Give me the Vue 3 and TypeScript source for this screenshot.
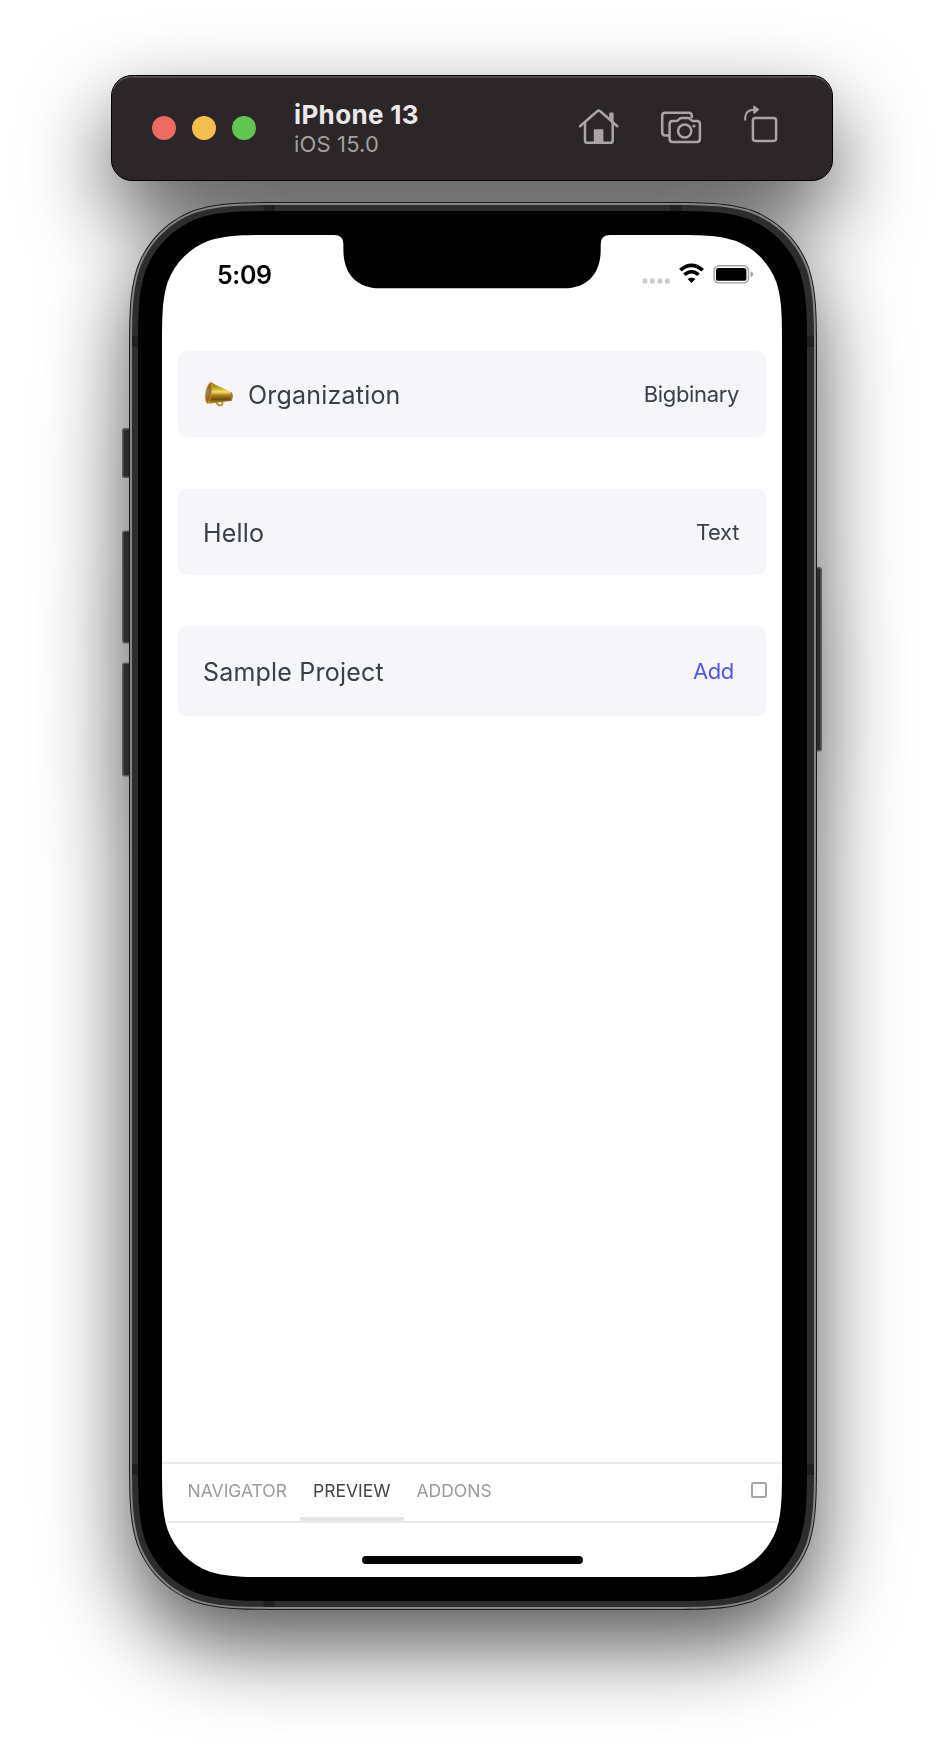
<script setup lang="ts">
interface Box {
  x: number
  y: number
  w: number
  h: number
}

// Rounded rectangle with continuous-curvature corners.
function smoothRect(x: number, y: number, w: number, h: number, r: number): string {
  const a = 1.528665 * r
  const b = 1.088493 * r
  const c = 0.868407 * r
  const d = 0.631494 * r
  const e = 0.074911 * r
  const f = 0.372824 * r
  const g = 0.16906 * r
  const R = x + w
  const B = y + h
  return [
    `M${x + a} ${y}H${R - a}`,
    `C${R - b} ${y} ${R - c} ${y} ${R - d} ${y + e}`,
    `C${R - f} ${y + g} ${R - g} ${y + f} ${R - e} ${y + d}`,
    `C${R} ${y + c} ${R} ${y + b} ${R} ${y + a}`,
    `V${B - a}`,
    `C${R} ${B - b} ${R} ${B - c} ${R - e} ${B - d}`,
    `C${R - g} ${B - f} ${R - f} ${B - g} ${R - d} ${B - e}`,
    `C${R - c} ${B} ${R - b} ${B} ${R - a} ${B}`,
    `H${x + a}`,
    `C${x + b} ${B} ${x + c} ${B} ${x + d} ${B - e}`,
    `C${x + f} ${B - g} ${x + g} ${B - f} ${x + e} ${B - d}`,
    `C${x} ${B - c} ${x} ${B - b} ${x} ${B - a}`,
    `V${y + a}`,
    `C${x} ${y + b} ${x} ${y + c} ${x + e} ${y + d}`,
    `C${x + g} ${y + f} ${x + f} ${y + g} ${x + d} ${y + e}`,
    `C${x + c} ${y} ${x + b} ${y} ${x + a} ${y}Z`,
  ].join('')
}

const shells = [
  { d: smoothRect(129, 202, 688, 1408, 104), fill: '#1a1a1a' },
  { d: smoothRect(130, 203, 686, 1406, 103), fill: '#858585' },
  { d: smoothRect(132, 205, 682, 1402, 101), fill: '#2d2d2d' },
  { d: smoothRect(138, 211, 669, 1390, 96), fill: '#000' },
  { d: smoothRect(162, 235, 620, 1342, 75), fill: '#fff' },
]
const screenClip = { clipPath: `path("${smoothRect(0, 0, 620, 1342, 75)}")` }

const keys: Box[] = [
  { x: 122, y: 428, w: 12, h: 50 },
  { x: 122, y: 530.5, w: 12, h: 113 },
  { x: 122, y: 662.5, w: 12, h: 114 },
  { x: 812, y: 567, w: 10, h: 184.5 },
]

const bands: Box[] = [
  { x: 263.7, y: 205, w: 11, h: 6 },
  { x: 670, y: 205, w: 11, h: 6 },
  { x: 132, y: 336, w: 6, h: 11 },
  { x: 807, y: 336, w: 7, h: 11 },
  { x: 132, y: 1464, w: 6, h: 11 },
  { x: 807, y: 1464, w: 7, h: 11 },
  { x: 263.7, y: 1601, w: 11, h: 6 },
]

const rows = [
  { label: 'Organization', value: 'Bigbinary', kind: 'icon' },
  { label: 'Hello', value: 'Text', kind: 'plain' },
  { label: 'Sample Project', value: 'Add', kind: 'action' },
]

const tabs = ['NAVIGATOR', 'PREVIEW', 'ADDONS']
const activeTab = 'PREVIEW'
</script>

<template>
  <main class="stage">
    <div class="device">
      <header class="toolbar">
        <div class="lights">
          <span class="light red"></span>
          <span class="light amber"></span>
          <span class="light green"></span>
        </div>
        <div class="titles">
          <div class="title">iPhone 13</div>
          <div class="version">iOS 15.0</div>
        </div>
        <svg class="tools" width="210" height="50" viewBox="575 100 210 50" fill="none" stroke="#aaa4a6" stroke-width="2.5" stroke-linecap="round" stroke-linejoin="round">
          <path d="M580 126.2 597.2 111.2Q598.7 110 600.2 111.2L617.3 126.2" />
          <path d="M585 123V140.4Q585 142.8 587.4 142.8H610.4Q612.7 142.8 612.7 140.4V123" />
          <path d="M610.4 113.8H612.4V121.5L610.4 119.5Z" fill="#aaa4a6" />
          <path d="M594.6 130H602.6V142.5H594.6Z" fill="#aaa4a6" stroke-width="1.6" />
          <path d="M668.5 135.4H665.4Q662.2 135.4 662.2 132.2V115.7Q662.2 112.7 665.2 112.7H688.6Q691.8 112.7 691.8 115.7V117" />
          <path d="M672.6 121H676.4Q677.7 121 678.6 119.8Q680 118 681.6 118H688Q689.6 118 690.9 119.8Q691.8 121 693.1 121H696.9Q699.9 121 699.9 124V139Q699.9 142 696.9 142H672.6Q669.6 142 669.6 139V124Q669.6 121 672.6 121Z" />
          <circle cx="684.7" cy="131" r="6.6" />
          <circle cx="694" cy="126" r="1.6" fill="#aaa4a6" stroke="none" />
          <rect x="752.9" y="117.9" width="23.2" height="23" rx="2.6" />
          <path d="M745.2 119.8V117Q745.8 110 754 109.8" stroke-width="2" />
          <path d="M754 106.4V113L758.4 109.7Z" fill="#aaa4a6" stroke-width="1.6" />
        </svg>
      </header>

      <section class="phone">
        <svg class="chassis" width="704" height="1408" viewBox="120 202 704 1408">
          <rect v-for="(k, i) in keys" :key="'k' + i" :x="k.x + 0.8" :y="k.y + 0.8" :width="k.w - 1.6" :height="k.h - 1.6" rx="2" fill="#2b2b2b" stroke="#5c5c5c" stroke-width="1.6" />
          <path v-for="(s, i) in shells" :key="'s' + i" :d="s.d" :fill="s.fill" />
          <rect v-for="(b, i) in bands" :key="'b' + i" :x="b.x" :y="b.y" :width="b.w" :height="b.h" fill="#202020" />
          <path d="M334 234H610V235Q600.7 235 600.7 244V250C600.7 274 587 288.3 564 288.3H380C357 288.3 343.4 274 343.4 250V244Q343.4 235 334 235Z" />
        </svg>

        <div class="screen" :style="screenClip">
          <div class="status">
            <span class="clock">5:09</span>
            <svg class="signals" width="116" height="24" viewBox="640 262 116 24">
              <rect v-for="x in [642.5, 650, 657.5, 665]" :key="x" :x="x" y="278.5" width="4.8" height="5" rx="1.4" fill="#cbcbcb" />
              <path d="M680.3 270.2Q691.5 260.6 702.7 270.2" fill="none" stroke="#000" stroke-width="3.6" />
              <path d="M684.4 274.7Q691.5 268.4 698.6 274.7" fill="none" stroke="#000" stroke-width="3.6" />
              <path d="M687.6 279Q691.5 275.8 695.4 279L691.5 283Z" />
              <rect x="714.1" y="265.7" width="34.4" height="17.2" rx="5" fill="none" stroke="#a0a0a0" stroke-width="1.4" />
              <rect x="716" y="267.9" width="30.4" height="12.9" rx="2.6" />
              <path d="M750.6 271.2Q753.1 272.2 753.1 274.3T750.6 277.4Z" fill="#a0a0a0" />
            </svg>
          </div>

          <div class="rows">
            <div v-for="row in rows" :key="row.label" class="row" :class="row.kind">
              <svg v-if="row.kind === 'icon'" class="horn" width="30" height="26" viewBox="0 0 30 26">
                <defs>
                  <linearGradient id="brass" x1="0" y1="0" x2="0" y2="1">
                    <stop offset="0" stop-color="#7a6316" />
                    <stop offset="0.3" stop-color="#d0ad2a" />
                    <stop offset="0.45" stop-color="#f6e06a" />
                    <stop offset="0.6" stop-color="#a8821a" />
                    <stop offset="0.8" stop-color="#6f4f10" />
                    <stop offset="1" stop-color="#c9a632" />
                  </linearGradient>
                </defs>
                <path d="M12.3 20.6Q13 24.3 16 24.3Q18.8 24.3 18.5 20.8" fill="none" stroke="#b58f2d" stroke-width="1.8" />
                <path d="M6.2 1.2Q8 .8 10 3L27.5 11.3Q29.3 15 27.6 19.7L6 22.8Q2 22 1.8 16Q1.8 6 6.2 1.2Z" fill="url(#brass)" />
                <path d="M6.4 1.2Q9.2 5 7.2 13Q5.6 21 3.8 22.7Q1 21 1.3 14.6Q2 5.5 6.4 1.2Z" fill="#9c6a1d" stroke="#d3a83a" stroke-width=".9" />
                <ellipse cx="3.8" cy="12" rx="1.5" ry="4" fill="#8c8074" transform="rotate(10 3.8 12)" />
                <path d="M3 16Q4 18 5.2 15" fill="none" stroke="#c84822" stroke-width="1.3" />
                <path d="M27.2 11.5Q28.9 15 27.2 19.3" fill="none" stroke="#a37a1f" stroke-width="1.4" />
              </svg>
              <span class="label">{{ row.label }}</span>
              <span class="value">{{ row.value }}</span>
            </div>
          </div>

          <nav class="tabs">
            <span v-for="tab in tabs" :key="tab" class="tab" :class="{ active: tab === activeTab }">{{ tab }}</span>
            <span class="toggle"></span>
          </nav>
          <div class="home-bar"></div>
        </div>
      </section>
    </div>
  </main>
</template>

<style>
body {
  margin: 0;
  background: #fff;
}
</style>

<style scoped>
.stage {
  width: 944px;
  height: 1760px;
  box-sizing: border-box;
  padding-top: 75px;
  overflow: hidden;
  background: #fff;
  font-family: Inter, "Liberation Sans", sans-serif;
}
.device {
  display: flex;
  flex-direction: column;
  align-items: center;
  gap: 21px;
  filter: drop-shadow(0 36px 42px rgba(0, 0, 0, 0.66));
}
.toolbar {
  width: 722px;
  height: 106px;
  box-sizing: border-box;
  display: flex;
  align-items: center;
  padding: 0 47px 0 40px;
  border: 1px solid #000;
  border-radius: 21px;
  background: #2d2628;
  box-shadow: inset 0 1.5px 0 #5a5657;
}
.lights {
  display: flex;
  gap: 16px;
}
.light {
  width: 24px;
  height: 24px;
  border-radius: 50%;
}
.red {
  background: #ed6a5e;
}
.amber {
  background: #f5bf4f;
}
.green {
  background: #61c554;
}
.titles {
  margin-left: 38px;
  flex: 1;
}
.title {
  font-size: 26px;
  line-height: 31px;
  font-weight: 700;
  letter-spacing: 0.35px;
  color: #ebe9e9;
  white-space: nowrap;
}
.version {
  font-size: 22px;
  line-height: 28px;
  letter-spacing: 0.15px;
  color: #a49ea0;
}
.tools {
  margin-top: -6px;
}
.phone {
  position: relative;
  width: 688px;
  height: 1408px;
  margin-left: 2px;
  box-sizing: border-box;
  padding: 33px 35px 33px 33px;
}
.chassis {
  position: absolute;
  left: -9px;
  top: 0;
}
.screen {
  position: relative;
  width: 620px;
  height: 1342px;
  display: flex;
  flex-direction: column;
}
.status {
  height: 116px;
  box-sizing: border-box;
  padding: 24px 26px 0 55px;
  display: flex;
  justify-content: space-between;
  align-items: flex-start;
}
.clock {
  margin-top: 1px;
  font-size: 25px;
  line-height: 30px;
  font-weight: 600;
  letter-spacing: -0.4px;
  color: #000;
}
.signals {
  margin-top: 3px;
}
.rows {
  flex: 1;
  padding: 0 16px;
  display: flex;
  flex-direction: column;
  gap: 51.5px;
}
.row {
  height: 86px;
  box-sizing: border-box;
  padding: 0 27px 0 25px;
  display: flex;
  align-items: center;
  border-radius: 9px;
  background: #f5f5fa;
  color: #384049;
}
.row.action {
  height: 90px;
  padding-right: 32px;
}
.horn {
  margin: 0 14px 0 1px;
}
.label {
  flex: 1;
  font-size: 25px;
  letter-spacing: 0.2px;
  line-height: 32px;
  margin-top: 2px;
}
.value {
  font-size: 22px;
  line-height: 28px;
  letter-spacing: -0.35px;
}
.action .value {
  color: #4f5ae8;
}
.tabs {
  height: 61px;
  box-sizing: border-box;
  margin-bottom: 33px;
  padding: 0 15px 0 12.5px;
  display: flex;
  align-items: stretch;
  border-top: 2px solid #e8e8e8;
  border-bottom: 2px solid #e8e8e8;
}
.tab {
  box-sizing: border-box;
  padding: 0 13px;
  font-size: 17.5px;
  line-height: 53px;
  color: #9b9b9b;
  border-bottom: 4px solid transparent;
}
.tab.active {
  color: #444;
  border-color: #e5e5e5;
}
.toggle {
  width: 16px;
  height: 16px;
  box-sizing: border-box;
  margin: 18px 0 0 auto;
  border: 2px solid #a3a3a3;
  border-radius: 2.5px;
}
.home-bar {
  width: 221px;
  height: 8px;
  margin: 0 auto 13px;
  border-radius: 4px;
  background: #000;
}
</style>
